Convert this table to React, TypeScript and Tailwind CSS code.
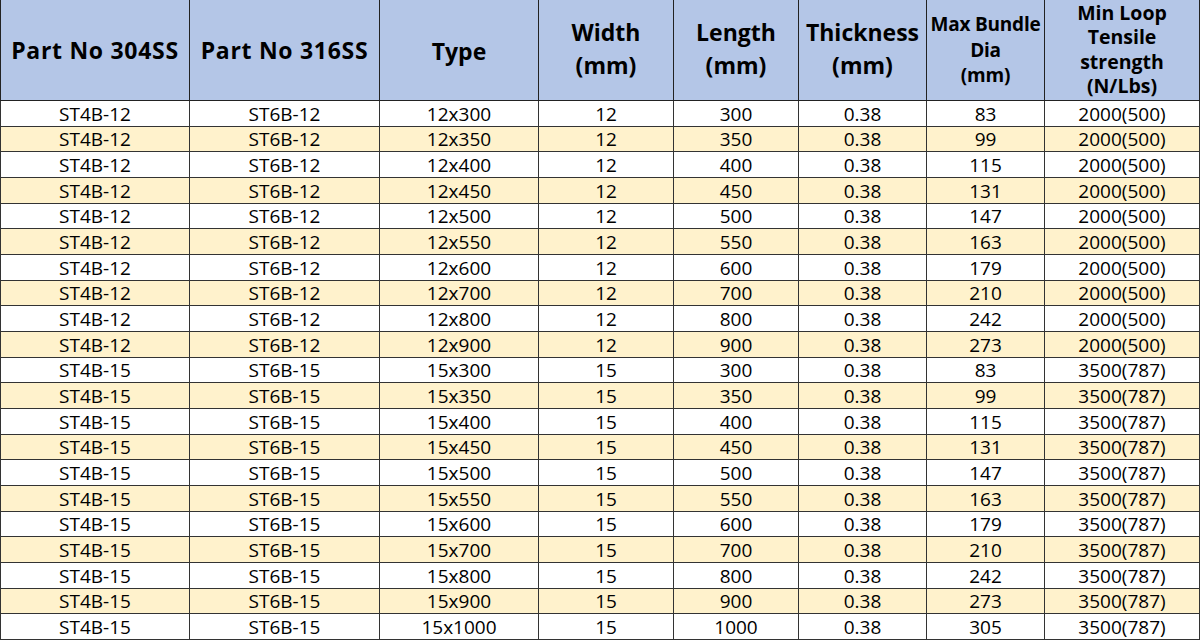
import React from "react";

const rows = [
  ["ST4B-12", "ST6B-12", "12x300", "12", "300", "0.38", "83", "2000(500)"],
  ["ST4B-12", "ST6B-12", "12x350", "12", "350", "0.38", "99", "2000(500)"],
  ["ST4B-12", "ST6B-12", "12x400", "12", "400", "0.38", "115", "2000(500)"],
  ["ST4B-12", "ST6B-12", "12x450", "12", "450", "0.38", "131", "2000(500)"],
  ["ST4B-12", "ST6B-12", "12x500", "12", "500", "0.38", "147", "2000(500)"],
  ["ST4B-12", "ST6B-12", "12x550", "12", "550", "0.38", "163", "2000(500)"],
  ["ST4B-12", "ST6B-12", "12x600", "12", "600", "0.38", "179", "2000(500)"],
  ["ST4B-12", "ST6B-12", "12x700", "12", "700", "0.38", "210", "2000(500)"],
  ["ST4B-12", "ST6B-12", "12x800", "12", "800", "0.38", "242", "2000(500)"],
  ["ST4B-12", "ST6B-12", "12x900", "12", "900", "0.38", "273", "2000(500)"],
  ["ST4B-15", "ST6B-15", "15x300", "15", "300", "0.38", "83", "3500(787)"],
  ["ST4B-15", "ST6B-15", "15x350", "15", "350", "0.38", "99", "3500(787)"],
  ["ST4B-15", "ST6B-15", "15x400", "15", "400", "0.38", "115", "3500(787)"],
  ["ST4B-15", "ST6B-15", "15x450", "15", "450", "0.38", "131", "3500(787)"],
  ["ST4B-15", "ST6B-15", "15x500", "15", "500", "0.38", "147", "3500(787)"],
  ["ST4B-15", "ST6B-15", "15x550", "15", "550", "0.38", "163", "3500(787)"],
  ["ST4B-15", "ST6B-15", "15x600", "15", "600", "0.38", "179", "3500(787)"],
  ["ST4B-15", "ST6B-15", "15x700", "15", "700", "0.38", "210", "3500(787)"],
  ["ST4B-15", "ST6B-15", "15x800", "15", "800", "0.38", "242", "3500(787)"],
  ["ST4B-15", "ST6B-15", "15x900", "15", "900", "0.38", "273", "3500(787)"],
  ["ST4B-15", "ST6B-15", "15x1000", "15", "1000", "0.38", "305", "3500(787)"],
];

const grid =
  "grid grid-cols-[190px_190px_159px_135px_125px_128px_118px_155px]";

function heightFor(i: number) {
  const top = Math.round(101 + (i * 539) / 21);
  const bot = Math.round(101 + ((i + 1) * 539) / 21);
  return bot - top;
}

export default function App() {
  return (
    <div
      className="w-[1200px] h-[640px] overflow-hidden bg-white text-black"
      style={{ fontFamily: '"Open Sans", "Noto Sans", sans-serif' }}
    >
      <div className={`${grid} h-[101px] bg-[#b4c6e7] border-b border-[#222] font-bold`}>
        <div className="flex items-center justify-center border-l border-r border-[#222] text-[23px] tracking-[0.7px]">
          Part No 304SS
        </div>
        <div className="flex items-center justify-center border-r border-[#222] text-[23px] tracking-[0.7px]">
          Part No 316SS
        </div>
        <div className="flex items-center justify-center border-r border-[#222] text-[23px] pt-[2px]">
          Type
        </div>
        <div className="flex flex-col items-center justify-center border-r border-[#222] text-[23px] leading-[33px] pb-[2px]">
          <span>Width</span>
          <span>(mm)</span>
        </div>
        <div className="flex flex-col items-center justify-center border-r border-[#222] text-[23px] leading-[33px] pb-[2px]">
          <span>Length</span>
          <span>(mm)</span>
        </div>
        <div className="flex flex-col items-center justify-center border-r border-[#222] text-[23px] leading-[33px] pb-[2px]">
          <span>Thickness</span>
          <span>(mm)</span>
        </div>
        <div className="flex flex-col items-center justify-center border-r border-[#222] text-[19px] leading-[25.5px] tracking-[-0.2px] pt-[1px]">
          <span>Max Bundle</span>
          <span>Dia</span>
          <span>(mm)</span>
        </div>
        <div className="flex flex-col items-center justify-center border-r border-[#222] text-[19.5px] leading-[24.5px] pb-[1px]">
          <span>Min Loop</span>
          <span>Tensile</span>
          <span>strength</span>
          <span>(N/Lbs)</span>
        </div>
      </div>
      {rows.map((r, i) => (
        <div
          key={i}
          className={`${grid} border-b border-[#333] ${i % 2 === 1 ? "bg-[#fff2cc]" : "bg-white"} ${
            heightFor(i) === 26 ? "h-[26px]" : "h-[25px]"
          }`}
        >
          {r.map((c, j) => (
            <div
              key={j}
              className={`flex items-center justify-center border-r border-[#333] text-[19px] leading-none pt-[1px] ${
                j === 0 ? "border-l" : ""
              }`}
            >
              {c}
            </div>
          ))}
        </div>
      ))}
    </div>
  );
}
